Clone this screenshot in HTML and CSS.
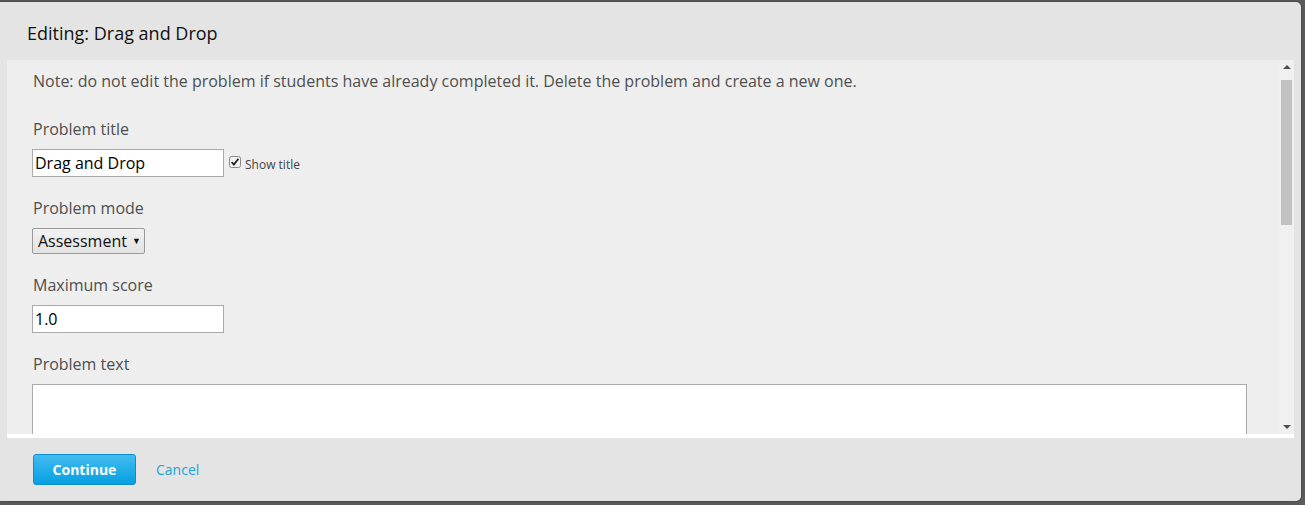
FILE: index.html
```html
<!DOCTYPE html>
<html>
<head>
<meta charset="utf-8">
<link rel="stylesheet" href="styles.css">
</head>
<body>
<div class="modal">
  <div class="modal-header">Editing: Drag and Drop</div>
  <div class="modal-body">
    <div class="content">
      <p class="note">Note: do not edit the problem if students have already completed it. Delete the problem and create a new one.</p>
      <div class="field">
        <div class="label">Problem title</div>
        <div class="row">
          <input class="text-input" type="text" value="Drag and Drop">
          <span class="check"><svg width="12" height="12" viewBox="0 0 12 12"><rect x="0.5" y="0.5" width="11" height="11" rx="2" fill="#f2f2f2" stroke="#8a8a8a"/><path d="M2.6 6.2 L4.9 8.6 L9.4 2.8" fill="none" stroke="#222" stroke-width="1.8"/></svg></span>
          <span class="check-label">Show title</span>
        </div>
      </div>
      <div class="field">
        <div class="label">Problem mode</div>
        <div class="row">
          <span class="select">Assessment<span class="caret">&#9660;</span></span>
        </div>
      </div>
      <div class="field">
        <div class="label">Maximum score</div>
        <div class="row">
          <input class="text-input" type="text" value="1.0">
        </div>
      </div>
      <div class="field">
        <div class="label">Problem text</div>
        <div class="textarea"></div>
      </div>
    </div>
    <div class="scrollbar">
      <div class="arrow up"></div>
      <div class="thumb"></div>
      <div class="spacer"></div>
      <div class="arrow down"></div>
    </div>
  </div>
  <div class="modal-footer">
    <button class="btn-primary">Continue</button>
    <a class="link" href="#">Cancel</a>
  </div>
</div>
</body>
</html>
```
FILE: styles.css
```css
html, body {
  margin: 0;
  padding: 0;
}
body {
  width: 1305px;
  height: 505px;
  background: #5c5c5c;
  font-family: "Open Sans", "Liberation Sans", sans-serif;
  overflow: hidden;
}
.modal {
  margin-top: 2px;
  width: 1301px;
  height: 499px;
  background: #e4e4e4;
  border-radius: 0 5px 5px 0;
  display: flex;
  flex-direction: column;
  box-shadow: 0 0 3px rgba(0,0,0,0.4);
}
.modal-header {
  height: 58px;
  box-sizing: border-box;
  padding: 3px 0 0 27px;
  display: flex;
  align-items: center;
  font-size: 18px;
  color: #111;
}
.modal-body {
  margin: 0 7px;
  height: 378px;
  box-sizing: border-box;
  border-bottom: 4px solid #fff;
  background: #eeeeee;
  display: flex;
  overflow: hidden;
}
.content {
  flex: 1;
  padding: 11px 0 0 26px;
  overflow: hidden;
}
.note {
  margin: 0 0 28px;
  font-size: 16px;
  line-height: 20px;
  color: #4f4f4f;
}
.field {
  margin-bottom: 21px;
}
.label {
  font-size: 16px;
  line-height: 20px;
  color: #4f4f4f;
  margin-bottom: 10px;
}
.row {
  display: flex;
  align-items: center;
}
.text-input {
  width: 192px;
  height: 28px;
  box-sizing: border-box;
  border: 1px solid #aaa;
  background: #fff;
  padding: 0 2px;
  margin: 0 0 0 -1px;
  font-family: "Open Sans", "Liberation Sans", sans-serif;
  font-size: 16px;
  color: #000;
  outline: none;
}
.check {
  display: inline-flex;
  margin-left: 5px;
  margin-top: -2px;
}
.check-label {
  font-size: 12px;
  color: #444;
  margin-left: 4px;
  margin-top: 2px;
}
.select {
  display: inline-flex;
  align-items: center;
  margin-left: -1px;
  width: 113px;
  height: 26px;
  box-sizing: border-box;
  border: 1px solid #9a9a9a;
  border-radius: 2px;
  background: linear-gradient(#f2f2f2, #e2e2e2);
  padding-left: 5px;
  font-size: 16px;
  color: #111;
}
.caret {
  font-size: 9px;
  margin-left: 5px;
  margin-top: -2px;
}
.textarea {
  margin-left: -1px;
  width: 1215px;
  height: 80px;
  box-sizing: border-box;
  border: 1px solid #aaa;
  background: #fff;
}
.scrollbar {
  width: 15px;
  display: flex;
  flex-direction: column;
  align-items: center;
  background: #f0f0f0;
}
.arrow {
  width: 0;
  height: 0;
  border-left: 4px solid transparent;
  border-right: 4px solid transparent;
}
.arrow.up {
  margin-top: 5px;
  border-bottom: 4px solid #505050;
}
.thumb {
  margin-top: 11px;
  width: 11px;
  height: 145px;
  background: #c1c1c1;
}
.spacer {
  flex: 1;
}
.arrow.down {
  margin-bottom: 5px;
  border-top: 4px solid #505050;
}
.modal-footer {
  flex: 1;
  display: flex;
  align-items: center;
  padding-left: 33px;
}
.btn-primary {
  width: 103px;
  height: 31px;
  border: 1px solid #0d8fce;
  border-radius: 3px;
  background: linear-gradient(#40bcf0, #06a0e2);
  color: #fff;
  font-family: "Open Sans", "Liberation Sans", sans-serif;
  font-weight: 700;
  font-size: 14px;
  padding: 0;
}
.link {
  margin-left: 20px;
  font-size: 14px;
  color: #1ea2dc;
  text-decoration: none;
}
```
